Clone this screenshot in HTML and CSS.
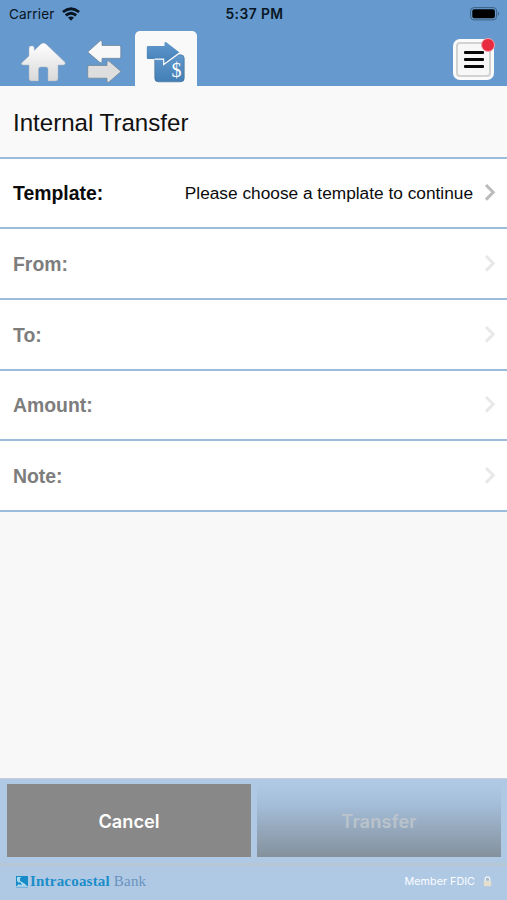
FILE: index.html
```html
<!DOCTYPE html>
<html lang="en">
<head>
<meta charset="utf-8">
<title>Internal Transfer</title>
<link rel="stylesheet" href="styles.css">
</head>
<body>
<div class="app">
  <header class="top">
    <div class="status">
      <div class="carrier"><span>Carrier</span>
        <svg class="wifi" width="18" height="14" viewBox="0 0 18 14"><g fill="none" stroke="#081522" stroke-width="2.8"><path d="M.9 5Q9-1.6 17.1 5"/><path d="M3.8 8.4Q9 4 14.2 8.4"/></g><path d="M6 10.6Q9 8.3 12 10.6L9 13.7z" fill="#081522"/></svg>
      </div>
      <div class="time">5:37 PM</div>
      <svg class="battery" width="30" height="14" viewBox="0 0 30 14"><rect x=".6" y=".6" width="26" height="12.3" rx="3.4" fill="none" stroke="#3c6286" stroke-width="1"/><rect x="2.3" y="2.3" width="22.6" height="8.9" rx="2" fill="#000"/><path d="M28 4.8q2 2 0 4z" fill="#35597b"/></svg>
    </div>
    <nav class="tabs">
      <a class="tab home">
        <svg width="46" height="40" viewBox="0 0 46 40"><defs><linearGradient id="silver" x2="0" y2="1"><stop stop-color="#fff"/><stop offset="1" stop-color="#d9d9d9"/></linearGradient></defs><path d="M23.5 0Q25 0 26.5 1.5L45 19.3Q46 21.5 43.5 22H38V35.5Q38 38 35.5 38H28V26.3Q28 24 25.7 24H20.8Q18.5 24 18.5 26.3V38H11.5Q9 38 9 35.5V22H3.3Q.3 21.7 2 19.5L9 13V5Q9 3 11 3H12.5Q14.2 3 14.2 5V7.5L20.5 1.5Q22 0 23.5 0Z" fill="url(#silver)" stroke="#aab3bc" stroke-width=".5"/></svg>
      </a>
      <a class="tab arrows">
        <svg width="36" height="44" viewBox="0 0 35.5 43.2" preserveAspectRatio="none"><g stroke="#6c8193" stroke-width=".7" stroke-linejoin="round"><path d="M.7 11.8L13 .8Q14.8.2 14.8 2V5.4H32Q33.3 5.4 33.3 7V16.7Q33.3 18 32 18H14.8V21.5Q14 23 12.5 21.8Z" fill="#f8f8f8"/><path d="M33.6 31L21.5 20.5Q19.7 20 19.7 21.8V25H2Q.7 25 .7 26.5V36Q.7 37.5 2 37.5H19.7V41Q20.5 42.3 22 41Z" fill="#dedede"/></g></svg>
      </a>
      <a class="tab active">
        <svg width="40" height="44" viewBox="0 0 40 44"><defs><linearGradient id="blue" x2="0" y2="1"><stop stop-color="#6198cc"/><stop offset="1" stop-color="#427eb5"/></linearGradient></defs><rect x="8.8" y="13.8" width="29.4" height="27" rx="3.5" fill="url(#blue)" stroke="#46729b" stroke-width=".7"/><path d="M2 5H18.5V1.8Q19 .6 20.3 1.3L33.5 11.5 19.5 23.3 17.8 22V18H2Q.8 18 .8 16.7V6.3Q.8 5 2 5Z" fill="url(#blue)"/><path d="M8.5 18.2H17.7V23.6L33.5 12" fill="none" stroke="#fff" stroke-width="1.2"/><text x="25.5" y="36" class="dollar">$</text></svg>
      </a>
      <button class="menu" aria-label="Menu"><span class="lines"><i></i><i></i><i></i></span><b class="dot"></b></button>
    </nav>
  </header>
  <h1>Internal Transfer</h1>
  <main>
    <div class="row enabled"><span class="label">Template:</span><span class="value">Please choose a template to continue</span><svg class="chev" width="12" height="19" viewBox="0 0 12 19"><path d="M2 2L9.2 9.3 2 16.6"/></svg></div>
    <div class="row"><span class="label">From:</span><svg class="chev" width="12" height="19" viewBox="0 0 12 19"><path d="M2 2L9.2 9.3 2 16.6"/></svg></div>
    <div class="row"><span class="label">To:</span><svg class="chev" width="12" height="19" viewBox="0 0 12 19"><path d="M2 2L9.2 9.3 2 16.6"/></svg></div>
    <div class="row"><span class="label">Amount:</span><svg class="chev" width="12" height="19" viewBox="0 0 12 19"><path d="M2 2L9.2 9.3 2 16.6"/></svg></div>
    <div class="row"><span class="label">Note:</span><svg class="chev" width="12" height="19" viewBox="0 0 12 19"><path d="M2 2L9.2 9.3 2 16.6"/></svg></div>
  </main>
  <div class="actions"><button class="cancel">Cancel</button><button class="transfer">Transfer</button></div>
  <footer>
    <svg width="12" height="12" viewBox="0 0 12 12"><path d="M0 0H12V10H0Z" fill="#168bc8"/><path d="M1 1H5L4 4 6 6 9 8 11 10H1L3 7 1 5Z" fill="#a9d8ef"/><path d="M4 2Q8 2 7 6L4 5ZM1 8L4 6 6 9Z" fill="#168bc8"/><path d="M0 11.4H12" stroke="#6db2dc"/></svg>
    <span class="bank"><b>Intracoastal</b> Bank</span>
    <span class="fdic">Member FDIC</span>
    <svg class="lock" width="9" height="11" viewBox="0 0 9 11"><path d="M2.3 6V3.3Q2.3 1 4.5 1T6.7 3.3V6" fill="none" stroke="#edf0ef" stroke-width="1.5"/><rect x=".8" y="5" width="7.4" height="5.3" rx="1" fill="#e4dfcc"/><path d="M3 3.5Q4.5 1.8 6 3.5" fill="none" stroke="#8795a0" stroke-width=".7"/></svg>
  </footer>
</div>
</body>
</html>
```
FILE: styles.css
```css
* { box-sizing: border-box; }
body { margin: 0; font-family: "Liberation Sans", Arial, sans-serif; color: #111; }
.app { width: 507px; height: 900px; display: flex; flex-direction: column; overflow: hidden; background: #f8f8f8; }
.top { height: 86px; flex: none; background: #6699cd; display: flex; flex-direction: column; }
.status { height: 28px; display: grid; grid-template-columns: 1fr auto 1fr; align-items: center; padding: 0 7px 0 9px; font: 13.6px Inter, sans-serif; color: #081522; }
.carrier { display: flex; align-items: center; gap: 7px; letter-spacing: .15px; }
.time { font-weight: 600; font-size: 13.8px; letter-spacing: .45px; }
.battery { justify-self: end; }
.tabs { flex: 1; display: flex; align-items: flex-start; }
.tab { display: block; }
.tab svg { display: block; }
.home { margin: 15px 0 0 20px; }
.arrows { margin: 12px 0 0 21px; }
.active { width: 62px; height: 55px; margin: 3px 0 0 12px; padding: 10px 0 0 11px; background: #f9f9f9; border-radius: 5px 5px 0 0; }
.dollar { font: 20px "Liberation Serif", serif; fill: #fff; }
.menu { position: relative; width: 41px; height: 41px; margin: 11px 13px 0 auto; padding: 3px; border: 0; border-radius: 7px; background: #fafafa; }
.lines { display: flex; flex-direction: column; align-items: center; justify-content: center; gap: 4px; height: 35px; border: 2px solid #d2d2d2; border-radius: 4px; background: #f7f7f7; }
.lines i { width: 20px; height: 3px; background: #080808; border-radius: 1px; }
.dot { position: absolute; top: -1px; right: -1px; width: 14px; height: 14px; border-radius: 50%; background: #e82a41; border: 1px solid #f3a3ab; }
h1 { height: 72.5px; flex: none; margin: 0; padding: 3px 13px 0; display: flex; align-items: center; font-size: 24.1px; font-weight: 400; background: #f9f9f9; border-bottom: 2px solid #9bbcdb; }
.row { height: 70.7px; padding: 0 11px 0 13px; display: flex; align-items: center; background: #fff; border-bottom: 2px solid #9bbcdb; font-size: 19.4px; color: #7d7d7d; }
.label { font-weight: 700; padding-top: 2px; }
.enabled { color: #0b0b0b; }
.value { margin-left: auto; font-size: 17.3px; padding-top: 2px; }
.chev { margin-left: auto; fill: none; stroke: #e8e8e8; stroke-width: 3; }
.enabled .chev { margin-left: 11px; stroke: #bbb; }
.actions { height: 85px; flex: none; margin-top: auto; padding: 5px 6px 6px 7px; display: flex; gap: 6px; background: #afc9e4; border-top: 1px solid #c7cfd7; }
.actions button { flex: 1; border: 0; padding: 0; font: 600 18.2px Inter, sans-serif; }
.actions .cancel { color: #fff; background: #888; }
.actions .transfer { color: #bac3cb; background: linear-gradient(#afc9e4, #a3bcd7 30%, #84919c); letter-spacing: .15px; }
footer { height: 37px; flex: none; display: flex; align-items: center; padding: 0 15px 3px 16px; background: #afc9e4; border-top: 3px solid #b8c7d4; }
.bank { margin-left: 2px; font: 15px "Liberation Serif", serif; letter-spacing: .2px; color: #6992bf; white-space: nowrap; }
.bank b { color: #1a8dc9; }
.fdic { margin-left: auto; font: 10.8px Inter, sans-serif; color: #fafcff; }
.lock { margin-left: 8px; }
```
